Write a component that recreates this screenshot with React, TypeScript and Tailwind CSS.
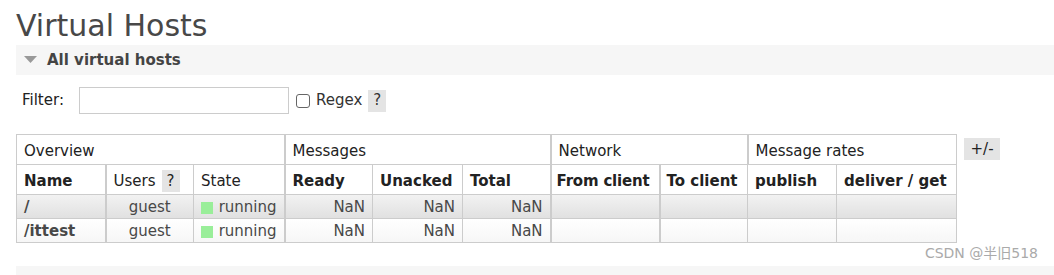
import React from 'react';

const rows = [
  { name: '/', users: 'guest', state: 'running', ready: 'NaN', unacked: 'NaN', total: 'NaN' },
  { name: '/ittest', users: 'guest', state: 'running', ready: 'NaN', unacked: 'NaN', total: 'NaN' },
];

const groupTh = 'border border-[#ccc] px-[7px] pt-[3px] h-[30px] text-left font-normal whitespace-nowrap';
const colTh = 'border border-[#ccc] px-[7px] pt-[3px] h-[30px] text-left whitespace-nowrap';
const td = 'border border-[#ccc] px-[7px] pt-[2px] h-[24px] text-[#484848] whitespace-nowrap';

const App: React.FC = () => {
  return (
    <div className="w-[1054px] h-[275px] overflow-hidden bg-white text-[#222] font-['DejaVu_Sans',Verdana,sans-serif] relative">
      <div className="pl-[16px]">
        <h1 className="text-[30px] leading-[45px] pt-[3px] text-[#484848] h-[45px]">Virtual Hosts</h1>

        {/* section header */}
        <div className="h-[30px] bg-[#f6f6f6] flex items-center pl-[8px] gap-[10px]">
          <svg width="13" height="8" viewBox="0 0 13 8">
            <polygon points="0,0 13,0 6.5,7" fill="#999" />
          </svg>
          <span className="text-[15px] font-bold text-[#444] pt-[1px]">All virtual hosts</span>
        </div>

        {/* filter */}
        <div className="flex items-center h-[48px] pt-[3px] pl-[6px] text-[15px] text-[#222]">
          <span>Filter:</span>
          <input className="ml-[15px] w-[210px] h-[27px] border border-[#ccc] bg-white" />
          <span className="ml-[7px] w-[14px] h-[14px] border border-[#666] rounded-[3px] bg-white" />
          <span className="ml-[6px] text-[#333]">Regex</span>
          <span className="ml-[6px] w-[18px] h-[22px] bg-[#e4e4e4] flex items-center justify-center text-[#333]">?</span>
        </div>

        <div className="flex items-start mt-[11px]">
          <table className="table-fixed w-[941px] border-collapse text-[15px] leading-none border border-[#ccc]">
            <colgroup>
              <col className="w-[89px]" />
              <col className="w-[88px]" />
              <col className="w-[91px]" />
              <col className="w-[88px]" />
              <col className="w-[90px]" />
              <col className="w-[88px]" />
              <col className="w-[109px]" />
              <col className="w-[88px]" />
              <col className="w-[89px]" />
              <col className="w-[120px]" />
            </colgroup>
            <thead>
              <tr>
                <th colSpan={3} className={groupTh}>Overview</th>
                <th colSpan={3} className={`${groupTh} border-l-2`}>Messages</th>
                <th colSpan={2} className={`${groupTh} border-l-2`}>Network</th>
                <th colSpan={2} className={`${groupTh} border-l-2`}>Message rates</th>
              </tr>
              <tr>
                <th className={colTh}>Name</th>
                <th className={`${colTh} font-normal border-l-2`}>
                  <span className="flex items-center gap-[6px]">
                    Users
                    <span className="w-[18px] h-[22px] bg-[#e4e4e4] flex items-center justify-center">?</span>
                  </span>
                </th>
                <th className={`${colTh} font-normal`}>State</th>
                <th className={`${colTh} border-l-2`}>Ready</th>
                <th className={colTh}>Unacked</th>
                <th className={colTh}>Total</th>
                <th className={`${colTh} border-l-2 !px-[5px] tracking-[-0.2px]`}>From client</th>
                <th className={`${colTh} border-l-2 !px-[6px]`}>To client</th>
                <th className={colTh}>publish</th>
                <th className={colTh}>deliver / get</th>
              </tr>
            </thead>
            <tbody>
              {rows.map((r, i) => (
                <tr key={r.name} className={i === 0 ? 'bg-gradient-to-b from-[#f2f2f2] to-[#e0e0e0]' : 'bg-gradient-to-b from-white to-[#f6f6f6]'}>
                  <td className={`${td} font-bold text-[#111]`}>{r.name}</td>
                  <td className={`${td} text-center border-l-2`}>{r.users}</td>
                  <td className={td}>
                    <span className="flex items-center gap-[6px]">
                      <span className="w-[12px] h-[12px] bg-[#99ee99]" />
                      {r.state}
                    </span>
                  </td>
                  <td className={`${td} text-right border-l-2`}>{r.ready}</td>
                  <td className={`${td} text-right`}>{r.unacked}</td>
                  <td className={`${td} text-right`}>{r.total}</td>
                  <td className={`${td} border-l-2`}></td>
                  <td className={`${td} border-l-2`}></td>
                  <td className={td}></td>
                  <td className={td}></td>
                </tr>
              ))}
            </tbody>
          </table>
          <span className="ml-[7px] mt-[4px] w-[36px] h-[22px] bg-[#e4e4e4] flex items-center justify-center text-[15px] text-[#222]">+/-</span>
        </div>

        <div className="flex justify-end pr-[16px] h-[23px] pt-[3px] items-start">
          <span className="text-[14px] text-[#aaa] font-['DejaVu_Sans','Noto_Sans_CJK_SC',sans-serif] leading-none">CSDN @半旧518</span>
        </div>
        <div className="h-[10px] bg-[#f6f6f6]" />
      </div>
    </div>
  );
};

export default App;
